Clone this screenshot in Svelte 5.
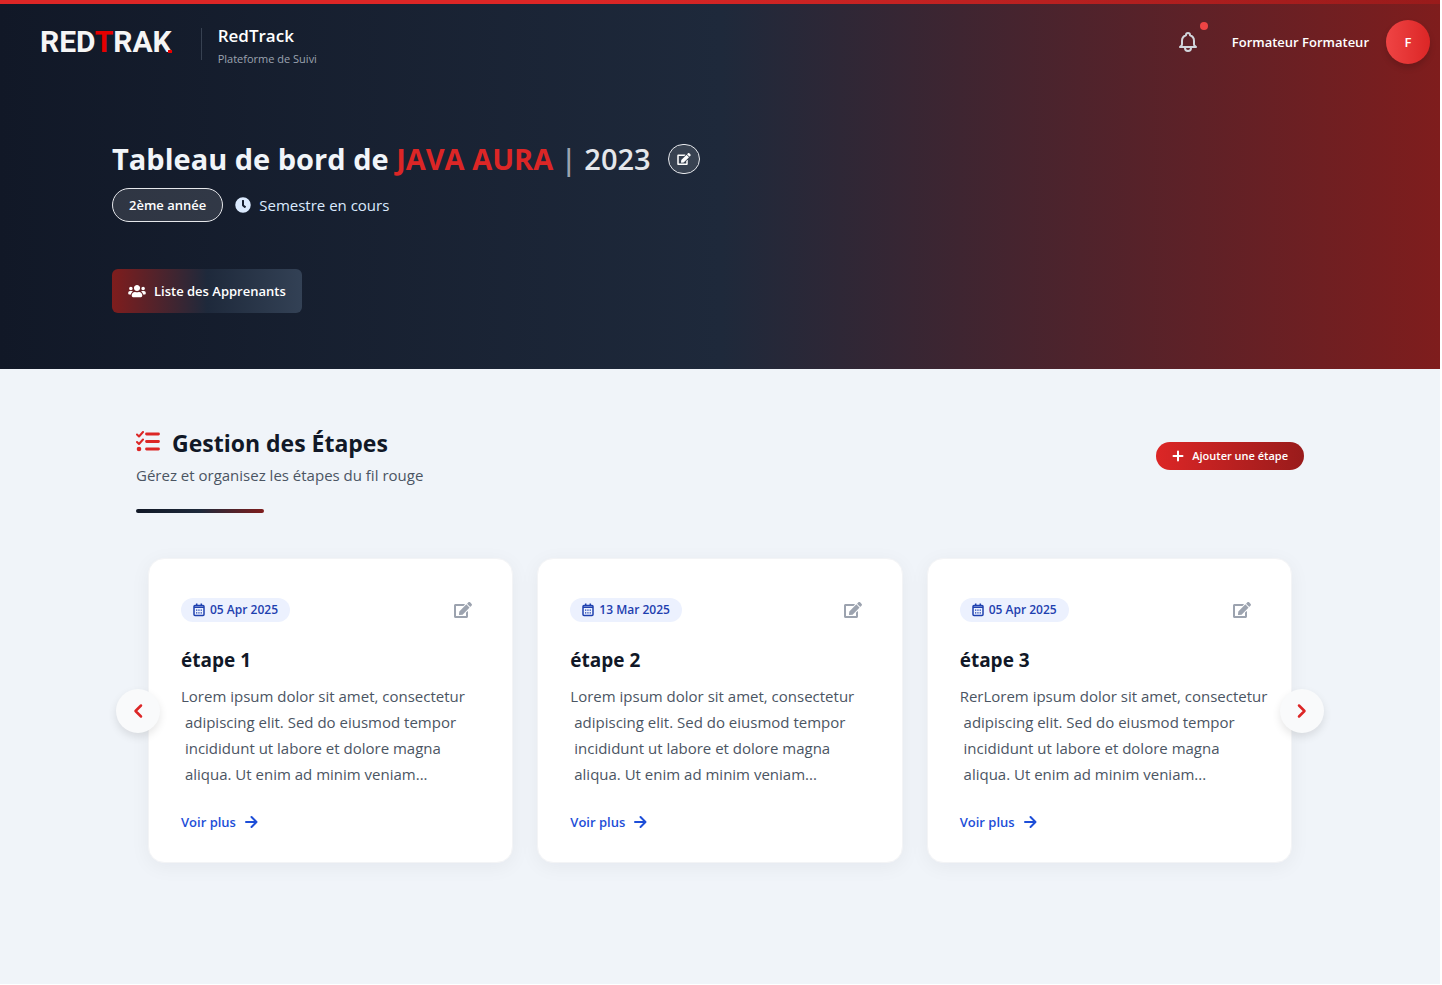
<script>
  const steps = [
    { title: 'étape 1', date: '05 Apr 2025', lead: 'Lorem' },
    { title: 'étape 2', date: '13 Mar 2025', lead: 'Lorem' },
    { title: 'étape 3', date: '05 Apr 2025', lead: 'RerLorem' }
  ];
  const body =
    ' ipsum dolor sit amet, consectetur\n adipiscing elit. Sed do eiusmod tempor\n incididunt ut labore et dolore magna\n aliqua. Ut enim ad minim veniam...';
</script>

{#snippet editIcon()}
  <svg viewBox="0 0 576 512" fill="currentColor" aria-hidden="true">
    <path d="M402.6 83.2l90.2 90.2c3.8 3.8 3.8 10 0 13.8L274.4 405.6l-92.8 10.3c-12.4 1.4-22.9-9.1-21.5-21.5l10.3-92.8L388.8 83.2c3.8-3.8 10-3.8 13.8 0zm162-22.9l-48.8-48.8c-15.2-15.2-39.9-15.2-55.2 0l-35.4 35.4c-3.8 3.8-3.8 10 0 13.8l90.2 90.2c3.8 3.8 10 3.8 13.8 0l35.4-35.4c15.2-15.3 15.2-40 0-55.2zM384 346.2V448H64V128h229.8c3.2 0 6.2-1.3 8.5-3.5l40-40c7.6-7.6 2.2-20.5-8.5-20.5H48C21.5 64 0 85.500 0 112v352c0 26.500 21.500 48 48 48h352c26.500 0 48-21.500 48-48V306.200c0-10.700-12.900-16-20.500-8.500l-40 40c-2.200 2.300-3.500 5.300-3.500 8.500z" />
  </svg>
{/snippet}

<div class="page">
  <div class="hero">
    <header>
      <a class="brand" href="#accueil">
        <span class="logo">RED<span class="logo-t">T</span>RAK</span>
        <span class="names">
          <span class="name">RedTrack</span>
          <span class="tagline">Plateforme de Suivi</span>
        </span>
      </a>
      <div class="account">
        <button class="bell" aria-label="Notifications">
          <svg viewBox="0 0 24 24" fill="none" stroke="currentColor" stroke-width="2" stroke-linejoin="round" stroke-linecap="round" aria-hidden="true">
            <path d="M15 17h5l-1.4-1.4A2 2 0 0 1 18 14.2V11a6 6 0 0 0-4-5.7V5a2 2 0 1 0-4 0v.3A6 6 0 0 0 6 11v3.2c0 .5-.2 1-.6 1.4L4 17h5m6 0v1a3 3 0 1 1-6 0v-1m6 0H9" />
          </svg>
          <span class="dot"></span>
        </button>
        <span class="user">Formateur Formateur</span>
        <button class="avatar" aria-label="Profil">F</button>
      </div>
    </header>

    <div class="intro">
      <h1>
        <span>Tableau de bord de <span class="group">JAVA AURA</span> <span class="year"><span class="bar">|</span> 2023</span></span>
        <button class="edit-title" aria-label="Modifier le titre">{@render editIcon()}</button>
      </h1>
      <div class="meta">
        <span class="level">2ème année</span>
        <span class="term">
          <svg viewBox="0 0 512 512" fill="currentColor" aria-hidden="true">
            <path d="M256 8a248 248 0 1 0 0 496 248 248 0 0 0 0-496zm92.500 313l-20 25a16 16 0 0 1-22.500 2.500l-67-49.700a40 40 0 0 1-15-31.200V112a16 16 0 0 1 16-16h32a16 16 0 0 1 16 16v144l58 42.500a16 16 0 0 1 2.500 22.500z" />
          </svg>
          Semestre en cours
        </span>
      </div>
      <button class="learners">
        <svg viewBox="0 0 640 512" fill="currentColor" aria-hidden="true">
          <path d="M96 224c35.300 0 64-28.700 64-64s-28.700-64-64-64-64 28.700-64 64 28.700 64 64 64zm448 0c35.300 0 64-28.700 64-64s-28.700-64-64-64-64 28.700-64 64 28.700 64 64 64zm32 32h-64c-17.600 0-33.500 7.100-45.100 18.600 40.300 22.100 68.900 62 75.100 109.400h66c17.700 0 32-14.300 32-32v-32c0-35.300-28.700-64-64-64zm-256 0c61.900 0 112-50.100 112-112S381.900 32 320 32 208 82.100 208 144s50.100 112 112 112zm76.800 32h-8.300c-20.800 10-43.900 16-68.500 16s-47.600-6-68.500-16h-8.300C179.600 288 128 339.600 128 403.200V432c0 26.500 21.500 48 48 48h288c26.500 0 48-21.500 48-48v-28.800c0-63.600-51.600-115.200-115.200-115.200zm-223.700-13.400C161.500 263.100 145.600 256 128 256H64c-35.300 0-64 28.700-64 64v32c0 17.700 14.300 32 32 32h65.900c6.300-47.400 34.900-87.300 75.200-109.400z" />
        </svg>
        Liste des Apprenants
      </button>
    </div>
  </div>

  <main>
    <div class="heading">
      <div>
        <h2>
          <svg viewBox="0 0 24 24" aria-hidden="true">
            <g fill="none" stroke="currentColor" stroke-linecap="round">
              <path stroke-width="2" stroke-linejoin="round" d="M1 3.500l2 2 4-4.500M1 11l2 2 4-4.500" />
              <path stroke-width="2.800" d="M10.500 3h12M10.500 10.500h12M10.500 18h12" />
            </g>
            <circle cx="3" cy="18" r="2.300" fill="currentColor" />
          </svg>
          Gestion des Étapes
        </h2>
        <p>Gérez et organisez les étapes du fil rouge</p>
        <div class="rule"></div>
      </div>
      <button class="add">
        <svg viewBox="0 0 12 12" fill="none" stroke="currentColor" stroke-width="2" stroke-linecap="round" aria-hidden="true"><path d="M6 1.500v9M1.500 6h9" /></svg>
        Ajouter une étape
      </button>
    </div>

    <div class="carousel">
      <div class="track">
        {#each steps as step}
          <article>
            <div class="top">
              <span class="date">
                <svg viewBox="0 0 12 14" fill="none" stroke="currentColor" aria-hidden="true">
                  <rect x="1" y="2.500" width="10" height="10" rx="1" stroke-width="1.500" />
                  <path stroke-width="1.500" d="M3.700 .5v2M8.300 .5v2M1 4.300h10" />
                  <path stroke-width="1.300" stroke-dasharray="1.300 1" d="M3 7.200h6M3 9.800h6" />
                </svg>
                {step.date}
              </span>
              <button class="edit" aria-label="Modifier {step.title}">{@render editIcon()}</button>
            </div>
            <h3>{step.title}</h3>
            <p class="text">{step.lead + body}</p>
            <a class="more" href="#etape">
              Voir plus
              <svg viewBox="0 0 14 14" fill="none" stroke="currentColor" stroke-width="2" stroke-linecap="round" stroke-linejoin="round" aria-hidden="true"><path d="M2 7h10M7.500 2L12.500 7l-5 5" /></svg>
            </a>
          </article>
        {/each}
      </div>
      <button class="nav prev" aria-label="Précédent">
        <svg viewBox="0 0 10 16" fill="none" stroke="currentColor" stroke-width="2.500" stroke-linecap="round" stroke-linejoin="round" aria-hidden="true"><path d="M8 2.500L2.500 8 8 13.500" /></svg>
      </button>
      <button class="nav next" aria-label="Suivant">
        <svg viewBox="0 0 10 16" fill="none" stroke="currentColor" stroke-width="2.500" stroke-linecap="round" stroke-linejoin="round" aria-hidden="true"><path d="M2 2.500L7.500 8 2 13.500" /></svg>
      </button>
    </div>
  </main>
</div>

<style>
  :global(body) {
    background: #fff;
  }
  .page {
    min-height: calc(100vh - 1px);
    margin: 0 2px 1px 0;
    background: #f0f4f9;
    font-family: 'Open Sans', 'Noto Sans', sans-serif;
    font-size: 15px;
    line-height: 24px;
    color: #111827;
  }
  .page * {
    box-sizing: border-box;
  }
  h1, h2, h3, p {
    margin: 0;
  }
  button {
    font: inherit;
    border: 0;
    padding: 0;
    cursor: pointer;
  }
  a {
    text-decoration: none;
  }
  svg {
    display: block;
    flex: none;
  }
  .hero {
    background: linear-gradient(90deg, #111827, #1e293b 50%, #7f1d1d);
    color: #fff;
    padding-bottom: 56px;
  }
  header {
    display: flex;
    align-items: center;
    justify-content: space-between;
    height: 90px;
    padding: 0 10px 10px 40px;
    border-top: 4px solid;
    border-image: linear-gradient(90deg, #dc2626 40%, #991b1b) 1;
  }
  .brand {
    display: flex;
    align-items: center;
    gap: 29px;
    color: #fff;
  }
  .logo {
    position: relative;
    font-family: Roboto, 'Open Sans', sans-serif;
    font-size: 30px;
    font-weight: 700;
    line-height: 30px;
    color: #f5f5f5;
  }
  .logo::after {
    content: '';
    position: absolute;
    right: 0;
    bottom: 4px;
    width: 4px;
    height: 3px;
    background: #e60000;
  }
  .logo-t {
    color: #e60000;
  }
  .names {
    display: flex;
    flex-direction: column;
    position: relative;
    padding-left: 17px;
    padding-top: 10px;
  }
  .names::before {
    content: '';
    position: absolute;
    left: 0;
    top: 14px;
    width: 1px;
    height: 32px;
    background: #374151;
  }
  .name {
    font-size: 17px;
    font-weight: 600;
  }
  .tagline {
    font-size: 11px;
    line-height: 22px;
    color: #9ca3af;
  }
  .account {
    display: flex;
    align-items: center;
    font-size: 13px;
    font-weight: 600;
  }
  .bell {
    position: relative;
    padding: 8px;
    margin-right: 24px;
    background: none;
    color: #d1d5db;
  }
  .bell svg {
    width: 24px;
    height: 24px;
  }
  .dot {
    position: absolute;
    right: 0;
    top: 0;
    width: 8px;
    height: 8px;
    border-radius: 50%;
    background: #ef4444;
  }
  .avatar {
    width: 44px;
    height: 44px;
    margin-left: 17px;
    border-radius: 50%;
    background: linear-gradient(90deg, #ef4444, #dc2626);
    color: #fff;
    box-shadow: 0 4px 6px rgb(0 0 0 / 15%);
  }
  .intro {
    max-width: 1280px;
    margin: 0 auto;
    padding: 49px 32px 0;
  }
  h1 {
    display: flex;
    align-items: center;
    gap: 17px;
    font-size: 29px;
    line-height: 40px;
    color: #f1f5f9;
  }
  .group {
    color: #dc2626;
  }
  .year {
    font-weight: 600;
    color: #e5e7eb;
  }
  .bar {
    color: #9ca3af;
  }
  .edit-title {
    display: grid;
    place-items: center;
    width: 32px;
    height: 30px;
    border: 1px solid #e5e7eb;
    border-radius: 16px;
    background: rgb(255 255 255 / 12%);
    color: #fff;
  }
  .edit-title svg {
    width: 14px;
    height: 12px;
  }
  .meta {
    display: flex;
    align-items: center;
    gap: 12px;
    margin-top: 9px;
  }
  .level {
    padding: 4px 16px;
    border: 1px solid #e5e7eb;
    border-radius: 17px;
    background: rgb(255 255 255 / 12%);
    font-size: 13px;
    font-weight: 600;
  }
  .term {
    display: flex;
    align-items: center;
    gap: 8px;
    color: #dbeafe;
  }
  .term svg {
    width: 16px;
    height: 16px;
  }
  .learners {
    display: flex;
    align-items: center;
    gap: 8px;
    height: 44px;
    margin-top: 47px;
    padding: 0 16px;
    border-radius: 6px;
    background: linear-gradient(90deg, #7f1d1d, #1e293b 50%, #334155);
    color: #fff;
    font-size: 13px;
    font-weight: 600;
  }
  .learners svg {
    width: 18px;
    height: 14px;
  }
  main {
    max-width: 1216px;
    margin: 0 auto;
    padding: 58px 24px 112px;
  }
  .heading {
    display: flex;
    align-items: center;
    justify-content: space-between;
  }
  h2 {
    display: flex;
    align-items: center;
    gap: 12px;
    font-size: 23px;
    line-height: 32px;
  }
  h2 svg {
    width: 24px;
    height: 24px;
    color: #dc2626;
  }
  .heading p {
    margin-top: 4px;
    color: #4b5563;
  }
  .rule {
    width: 128px;
    height: 4px;
    margin-top: 22px;
    border-radius: 2px;
    background: linear-gradient(90deg, #111827, #1e293b 50%, #7f1d1d);
  }
  .add {
    display: flex;
    align-items: center;
    gap: 8px;
    height: 28px;
    margin-bottom: 28px;
    padding: 0 16px;
    border-radius: 14px;
    background: linear-gradient(90deg, #dc2626, #991b1b);
    color: #fff;
    font-size: 11px;
    font-weight: 600;
  }
  .add svg {
    width: 12px;
    height: 12px;
  }
  .carousel {
    position: relative;
    margin-top: 45px;
  }
  .track {
    display: grid;
    grid-template-columns: repeat(3, 1fr);
    gap: 24px;
    padding: 0 12px;
  }
  article {
    min-width: 0;
    padding: 39px 32px 28px;
    border: 1px solid #f3f4f6;
    border-radius: 16px;
    background: #fff;
    box-shadow: 0 4px 20px rgb(15 23 42 / 5%);
  }
  .top {
    display: flex;
    align-items: center;
    justify-content: space-between;
    padding-right: 8px;
  }
  .date {
    display: flex;
    align-items: center;
    gap: 5px;
    padding: 0 12px;
    border-radius: 12px;
    background: #ecf1fe;
    color: #1e40af;
    font-size: 12px;
    font-weight: 600;
  }
  .date svg {
    width: 12px;
    height: 14px;
  }
  .edit {
    background: none;
    color: #9ca3af;
  }
  .edit svg {
    width: 18px;
    height: 16px;
  }
  h3 {
    margin-top: 24px;
    font-size: 19px;
    line-height: 28px;
  }
  .text {
    margin-top: 9px;
    line-height: 26px;
    color: #4b5563;
    white-space: pre;
  }
  .more {
    display: inline-flex;
    align-items: center;
    gap: 8px;
    margin-top: 23px;
    color: #1d4ed8;
    font-size: 13px;
    font-weight: 600;
  }
  .more svg {
    width: 14px;
    height: 14px;
  }
  .nav {
    position: absolute;
    top: calc(50% - 22px);
    display: grid;
    place-items: center;
    width: 44px;
    height: 44px;
    border-radius: 50%;
    background: #f9fafb;
    color: #dc2626;
    box-shadow: 0 4px 8px rgb(0 0 0 / 10%);
  }
  .nav svg {
    width: 10px;
    height: 16px;
  }
  .prev {
    left: -20px;
  }
  .next {
    right: -20px;
  }
</style>
